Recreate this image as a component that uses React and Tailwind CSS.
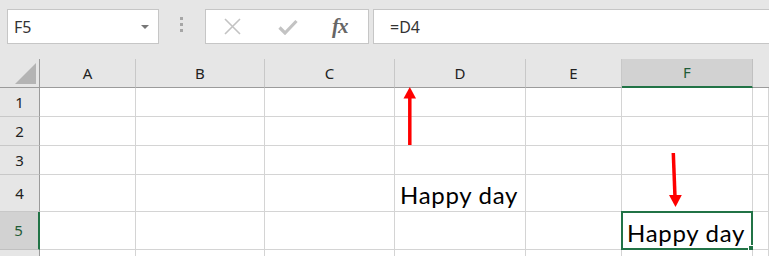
import React from "react";

const UI = { fontFamily: '"Noto Sans", "Open Sans", sans-serif' };
const CELL = { fontFamily: 'Lato, "Noto Sans", sans-serif' };

const colLetters = ["A", "B", "C", "D", "E", "F"];

function ColHeader({ label, selected }) {
  if (selected) {
    return (
      <div className="flex items-center justify-center bg-[#d2d2d2] border-r border-r-[#c0c0c0] border-b-2 border-b-[#217346] text-[15px] text-[#1f5c37]">
        {label}
      </div>
    );
  }
  return (
    <div className="flex items-center justify-center border-r border-r-[#c8c8c8] border-b border-b-[#9b9b9b] text-[15px] text-[#222]">
      {label}
    </div>
  );
}

function RowHeader({ label, selected }) {
  if (selected) {
    return (
      <div className="flex items-center justify-center bg-[#d2d2d2] border-r-2 border-r-[#217346] border-b border-b-[#c0c0c0] text-[15px] text-[#1f5c37] pr-[1px]">
        {label}
      </div>
    );
  }
  return (
    <div className="flex items-center justify-center border-r border-r-[#9b9b9b] border-b border-b-[#c8c8c8] text-[15px] text-[#222]">
      {label}
    </div>
  );
}

function Cell({ children, selected }) {
  return (
    <div className="relative flex items-end border-r border-b border-[#d4d4d4] bg-white pl-[5px] pb-[1px] text-[24px] leading-[30px] tracking-[0.7px] text-black whitespace-nowrap" style={CELL}>
      {children}
      {selected && (
        <div className="absolute -left-[1px] -top-[1px] w-[132px] h-[39px] border-2 border-[#217346]">
          <div className="absolute -right-[4px] -bottom-[4px] w-[7px] h-[7px] bg-[#217346] border border-white"></div>
        </div>
      )}
    </div>
  );
}

export default function App() {
  const rows = [
    { n: "1", cells: {} },
    { n: "2", cells: {} },
    { n: "3", cells: {} },
    { n: "4", cells: { D: "Happy day" } },
    { n: "5", cells: { F: "Happy day" }, sel: true },
    { n: "", cells: {} },
  ];
  return (
    <div className="relative w-[769px] h-[256px] overflow-hidden bg-[#e6e6e6]" style={UI}>
      {/* formula bar */}
      <div className="flex items-start h-[59px] pt-[9px] pl-[7px]">
        <div className="flex items-center justify-between w-[152px] h-[35px] bg-white border border-[#c6c6c6] pl-[6px] pr-[9px] text-[16px] text-[#333]">
          <span>F5</span>
          <span className="w-0 h-0 border-l-[4px] border-r-[4px] border-t-[4px] border-l-transparent border-r-transparent border-t-[#777] mt-[1px]"></span>
        </div>
        <div className="flex flex-col gap-[3px] ml-[21px] mt-[8px]">
          <span className="w-[3px] h-[3px] bg-[#a6a6a6]"></span>
          <span className="w-[3px] h-[3px] bg-[#a6a6a6]"></span>
          <span className="w-[3px] h-[3px] bg-[#a6a6a6]"></span>
        </div>
        <div className="flex items-center w-[164px] h-[35px] ml-[22px] bg-white border border-[#c6c6c6]">
          <svg className="ml-[18px]" width="17" height="17" viewBox="0 0 17 17">
            <path d="M1 1 L16 16 M16 1 L1 16" stroke="#c3c3c3" strokeWidth="1.6" fill="none" />
          </svg>
          <svg className="ml-[37px]" width="20" height="16" viewBox="0 0 20 16">
            <path d="M1.5 8.5 L7 14 L18.5 2" stroke="#c3c3c3" strokeWidth="3.2" fill="none" />
          </svg>
          <span className="ml-[34px] text-[21px] leading-none italic font-bold text-[#666] tracking-[-1px]" style={{ fontFamily: '"Liberation Serif", serif' }}>
            fx
          </span>
        </div>
        <div className="flex items-center flex-1 h-[35px] ml-[4px] bg-white border border-[#c6c6c6] border-r-0 pl-[16px] text-[16px] text-[#333]">
          =D4
        </div>
      </div>

      {/* grid */}
      <div className="grid grid-cols-[40px_96px_129px_130px_131px_96px_131px_1fr] grid-rows-[29px_29px_29px_29px_37px_38px_20px]">
        <div className="relative border-r border-r-[#9b9b9b] border-b border-b-[#9b9b9b]">
          <svg className="absolute left-[15px] top-[4px]" width="21" height="21" viewBox="0 0 21 21">
            <polygon points="0,21 21,21 21,0" fill="#b4b4b4" />
          </svg>
        </div>
        {colLetters.map((c) => (
          <ColHeader key={c} label={c} selected={c === "F"} />
        ))}
        <div className="border-b border-b-[#9b9b9b]"></div>

        {rows.map((r, i) => (
          <React.Fragment key={i}>
            <RowHeader label={r.n} selected={r.sel} />
            {colLetters.map((c) => (
              <Cell key={c} selected={r.sel && c === "F"}>
                {r.cells[c]}
              </Cell>
            ))}
            <Cell />
          </React.Fragment>
        ))}
      </div>

      {/* annotation arrows */}
      <svg className="absolute inset-0 pointer-events-none" width="769" height="256" viewBox="0 0 769 256">
        <line x1="409.8" y1="145" x2="409.8" y2="96" stroke="#ff0000" strokeWidth="3.5" />
        <polygon points="403.5,98.5 416,98.5 409.8,87" fill="#ff0000" />
        <line x1="673.3" y1="153" x2="675" y2="197" stroke="#ff0000" strokeWidth="3.5" />
        <polygon points="669,195 681.8,195 675.5,207" fill="#ff0000" />
      </svg>
    </div>
  );
}
